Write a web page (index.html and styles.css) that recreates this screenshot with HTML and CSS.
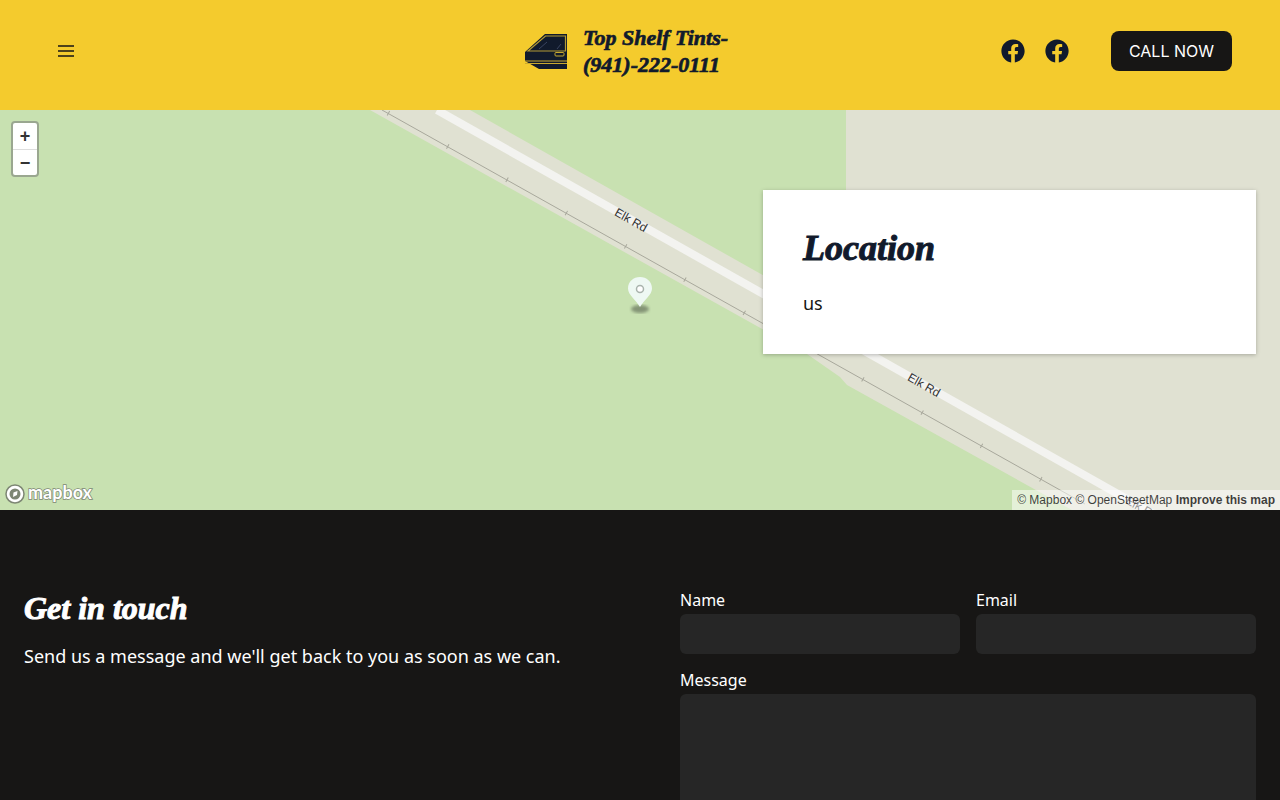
FILE: index.html
```html
<!DOCTYPE html>
<html lang="en">
<head>
    <meta charset="UTF-8">
    <meta name="viewport" content="width=device-width, initial-scale=1.0">
    <title>Top Shelf Tints</title>
    <link rel="stylesheet" href="styles.css">
</head>
<body>

<!-- header -->
<header class="site-header">
  <button class="menu-btn" aria-label="Menu">
    <svg width="16" height="12" viewBox="0 0 16 12"><path d="M0 1h16M0 6h16M0 11h16" stroke="#171615" stroke-width="1.5" fill="none"/></svg>
  </button>
  <a class="brand" href="#">
    <svg class="brand-door" width="42" height="36" viewBox="0 0 42 36">
      <polygon points="0,18 20,0 42,0 42,35 14,35 0,27" fill="#111a2c"/>
      <path d="M3 17 20.500 2H40.500V17Z" fill="none" stroke="#b39a35" stroke-width="1.200"/>
      <path d="M0 27H42M0 29.500H42" stroke="#c9a92f" stroke-width="1"/>
      <rect x="30" y="18.500" width="9" height="3.500" rx="1" fill="none" stroke="#c9a92f" stroke-width="1"/>
      <path d="M14 15 22 8M32 15 36 10" stroke="#3a4460" stroke-width="1"/>
    </svg>
    <span class="brand-name">Top Shelf Tints-<br>(941)-222-0111</span>
  </a>
  <div class="header-actions">
    <a class="social" href="#" aria-label="Facebook">
      <svg width="24" height="24" viewBox="0 0 512 512"><path fill="#111a2c" d="M504 256C504 119 393 8 256 8S8 119 8 256c0 123.780 90.690 226.380 209.250 245V327.690h-63V256h63v-54.640c0-62.150 37-96.480 93.670-96.480 27.140 0 55.520 4.840 55.520 4.840v61h-31.280c-30.800 0-40.410 19.120-40.410 38.730V256h68.780l-11 71.690h-57.780V501C413.310 482.380 504 379.780 504 256z"/></svg>
    </a>
    <a class="social" href="#" aria-label="Facebook">
      <svg width="24" height="24" viewBox="0 0 512 512"><path fill="#111a2c" d="M504 256C504 119 393 8 256 8S8 119 8 256c0 123.780 90.690 226.380 209.250 245V327.690h-63V256h63v-54.640c0-62.150 37-96.480 93.670-96.480 27.140 0 55.520 4.840 55.520 4.840v61h-31.280c-30.800 0-40.410 19.120-40.410 38.730V256h68.780l-11 71.690h-57.780V501C413.310 482.380 504 379.780 504 256z"/></svg>
    </a>
    <a class="call-btn" href="#">CALL NOW</a>
  </div>
</header>

<!-- map -->
<section class="map">
  <svg class="map-canvas" width="1280" height="400" viewBox="0 0 1280 400">
    <polygon points="370,0 470,0 846,212 846,0 1280,0 1280,400 1072,400 1000,360 847,275 840,267 807,244" fill="#e0e1d2"/>
    <line x1="437" y1="0" x2="1180" y2="419" stroke="#f3f3f0" stroke-width="8"/>
    <line x1="382" y1="0" x2="1085" y2="394" stroke="#a8a89c" stroke-width="1"/>
    <line x1="388" y1="3" x2="1085" y2="394" stroke="#a8a89c" stroke-width="5" stroke-dasharray="1 67"/>
    <text class="road-label" transform="translate(631 110) rotate(29.500)" text-anchor="middle" dy="4">Elk Rd</text>
    <text class="road-label" transform="translate(924 275) rotate(29.500)" text-anchor="middle" dy="4">Elk Rd</text>
    <text class="road-label" transform="translate(1142 398) rotate(29.500)" text-anchor="middle" dy="4">Elk Rd</text>
  </svg>

  <div class="zoom-ctrl">
    <button>+</button>
    <button>&minus;</button>
  </div>

  <svg class="pin" width="28" height="40" viewBox="0 0 28 40">
    <defs>
      <filter id="blur"><feGaussianBlur stdDeviation="1.800"/></filter>
    </defs>
    <ellipse cx="14" cy="33" rx="9" ry="4" fill="#6d7a62" opacity=".75" filter="url(#blur)"/>
    <path d="M14 31C10 24 2 19 2 12.500 2 5.500 7.500 1 14 1s12 4.500 12 11.500C26 19 18 24 14 31Z" fill="#eef8f3"/>
    <circle cx="14" cy="13" r="3.500" fill="#fff" stroke="#a9b3ad" stroke-width="1.500"/>
  </svg>

  <div class="location-card">
    <h2>Location</h2>
    <p>us</p>
  </div>

  <svg class="mapbox-logo" width="90" height="24" viewBox="0 0 90 24">
    <circle cx="11" cy="12" r="9" fill="#fff" stroke="#7d8674" stroke-width="1.500"/>
    <circle cx="11" cy="12" r="5.500" fill="#7d8674"/>
    <path d="M9 15 9.500 10.500 13.500 9 13 13Z" fill="#fff"/>
    <text class="mapbox-word" x="24" y="17">mapbox</text>
  </svg>

  <div class="attribution">
    <a href="#">&copy; Mapbox</a> <a href="#">&copy; OpenStreetMap</a> <a class="improve" href="#">Improve this map</a>
  </div>
</section>

<!-- contact -->
<section class="contact">
  <div class="contact-intro">
    <h2>Get in touch</h2>
    <p>Send us a message and we'll get back to you as soon as we can.</p>
  </div>
  <form class="contact-form">
    <div class="field">
      <label for="name">Name</label>
      <input type="text" id="name">
    </div>
    <div class="field">
      <label for="email">Email</label>
      <input type="email" id="email">
    </div>
    <div class="field field-wide">
      <label for="message">Message</label>
      <textarea id="message"></textarea>
    </div>
  </form>
</section>

</body>
</html>
```

FILE: styles.css
```css
body {
  margin: 0;
  font-family: "Noto Sans", Lato, sans-serif;
  background: #171615;
  color: #fff;
}

/* header */
.site-header {
  height: 110px;
  box-sizing: border-box;
  padding: 0 48px 8px 58px;
  display: grid;
  grid-template-columns: 1fr 240px 1fr;
  align-items: center;
  background: #f4cb2d;
}

.menu-btn {
  width: 16px;
  height: 12px;
  padding: 0;
  display: flex;
  border: 0;
  background: none;
}

.brand {
  display: flex;
  align-items: center;
  gap: 16px;
  color: #111a2c;
  text-decoration: none;
}

.brand-door {
  flex: none;
  margin-top: 2px;
}

.brand-name {
  font-family: "Liberation Serif", serif;
  font-weight: bold;
  font-style: italic;
  font-size: 22px;
  line-height: 27px;
  white-space: nowrap;
  -webkit-text-stroke: 0.7px #111a2c;
}

.header-actions {
  display: flex;
  align-items: center;
  justify-content: flex-end;
  gap: 20px;
}

.social {
  display: flex;
}

.call-btn {
  margin-left: 22px;
  padding: 0 18px;
  height: 40px;
  display: flex;
  align-items: center;
  background: #171615;
  color: #fff;
  border-radius: 8px;
  font-family: Inter, sans-serif;
  font-size: 16px;
  text-decoration: none;
}

/* map */
.map {
  position: relative;
  height: 400px;
  overflow: hidden;
  background: #c8e1b1;
}

.map-canvas {
  position: absolute;
  left: 0;
  top: 0;
}

.road-label {
  font-family: "Liberation Sans", sans-serif;
  font-size: 12px;
  fill: #333;
}

.zoom-ctrl {
  position: absolute;
  left: 11px;
  top: 11px;
  width: 24px;
  display: flex;
  flex-direction: column;
  border: 2px solid #9aa790;
  border-radius: 4px;
  background: #fff;
}

.zoom-ctrl button {
  height: 26px;
  padding: 0;
  border: 0;
  background: none;
  color: #333;
  font-family: "Liberation Sans", sans-serif;
  font-size: 18px;
  font-weight: bold;
  line-height: 26px;
}

.zoom-ctrl button + button {
  border-top: 1px solid #ddd;
}

.pin {
  position: absolute;
  left: 626px;
  top: 166px;
}

.location-card {
  position: absolute;
  left: 763px;
  top: 80px;
  width: 493px;
  height: 164px;
  box-sizing: border-box;
  padding: 40px;
  background: #fff;
  color: #171615;
  box-shadow: 0 1px 4px rgba(0, 0, 0, 0.25);
}

.location-card h2 {
  margin: 0;
  font-family: "Liberation Serif", serif;
  font-weight: bold;
  font-style: italic;
  font-size: 36px;
  line-height: 36px;
  color: #111a2c;
  -webkit-text-stroke: 1px #111a2c;
}

.location-card p {
  margin: 23px 0 0;
  font-size: 18px;
  line-height: 28px;
}

.mapbox-logo {
  position: absolute;
  left: 4px;
  bottom: 4px;
}

.mapbox-word {
  font-family: Lato, sans-serif;
  font-weight: bold;
  font-size: 18px;
  fill: #fff;
  stroke: #7d8674;
  stroke-width: 1.5px;
  paint-order: stroke;
}

.attribution {
  position: absolute;
  right: 0;
  bottom: 0;
  height: 20px;
  padding: 0 5px;
  background: rgba(255, 255, 255, 0.5);
  font-family: "Liberation Sans", sans-serif;
  font-size: 12px;
  line-height: 20px;
}

.attribution a {
  color: rgba(0, 0, 0, 0.75);
  text-decoration: none;
}

.attribution .improve {
  font-weight: bold;
}

/* contact */
.contact {
  padding: 80px 24px 64px;
  display: grid;
  grid-template-columns: 1fr 576px;
  background: #171615;
}

.contact-intro h2 {
  margin: 0;
  font-family: "Liberation Serif", serif;
  font-weight: bold;
  font-style: italic;
  font-size: 32px;
  line-height: 36px;
  -webkit-text-stroke: 1px #fff;
}

.contact-intro p {
  margin: 16px 0 0;
  font-size: 18px;
  line-height: 28px;
}

.contact-form {
  display: grid;
  grid-template-columns: 1fr 1fr;
  gap: 16px;
}

.field-wide {
  grid-column: span 2;
}

.field label {
  display: block;
  margin-bottom: 4px;
  font-size: 16px;
  line-height: 20px;
}

.field input,
.field textarea {
  display: block;
  width: 100%;
  box-sizing: border-box;
  height: 40px;
  border: 0;
  border-radius: 6px;
  background: #262626;
  color: #fff;
}

.field textarea {
  height: 160px;
}
```
